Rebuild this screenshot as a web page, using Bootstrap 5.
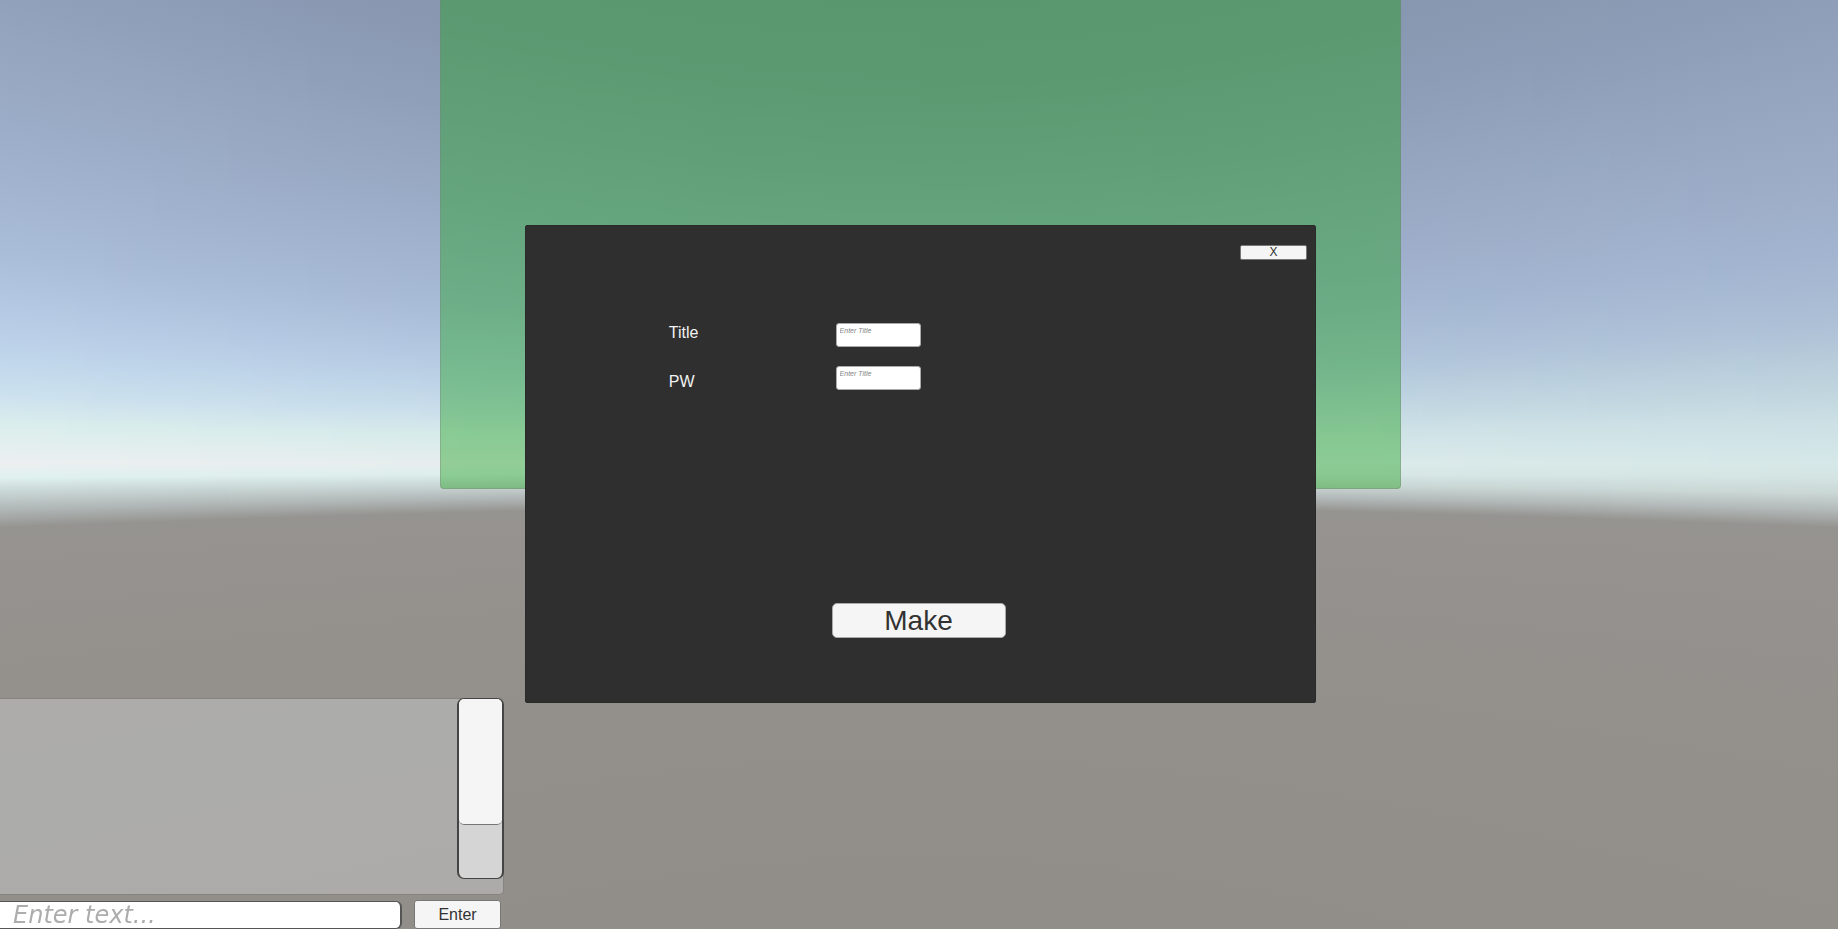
<!DOCTYPE html>
<html lang="en">
<head>
<meta charset="utf-8">
<meta name="viewport" content="width=device-width, initial-scale=1">
<title>Make room</title>
<link href="https://cdn.jsdelivr.net/npm/bootstrap@5.3.0/dist/css/bootstrap.min.css" rel="stylesheet">
<style>
  body { font-family: "Liberation Sans", Arial, sans-serif; background: #928e89; color: #323232; }
  .scene { display: grid; min-height: 100vh; grid-template-columns: 440fr 85fr 791fr 85fr 437fr; grid-template-rows: 225fr 264fr 214fr 226fr; }
  .sky { grid-area: 1 / 1 / -1 / -1; min-width: 0; min-height: 0; height: 100vh; }
  .board { grid-area: 1 / 2 / 3 / 5; background: rgba(26,158,24,.41); border: 1px solid rgba(120,125,125,.35); border-top: 0; border-radius: 0 0 4px 4px; }
  .room-dialog { grid-area: 2 / 3 / 4 / 4; background: #2f2f2f; border: 1px solid #292b2a; border-radius: 2px; padding: 19px 8px 64px; }
  .ui-btn { background: #f5f5f5; color: #323232; border: 1px solid #777; padding: 0; display: flex; align-items: center; justify-content: center; }
  .ui-btn:hover { background: #fff; }
  .close-btn { width: 67px; height: 15px; font-size: 12px; line-height: 13px; border-radius: 2px; }
  .make-btn { width: 174px; height: 35px; font-size: 28px; line-height: 32px; border-radius: 5px; margin-right: 4px; border-color: #aaa; }
  .fields { display: grid; grid-template-columns: 135fr 167fr 472fr; margin-top: 63px; }
  .names { grid-column: 2; color: #f2f2f2; font-size: 16px; line-height: 20px; gap: 29px; }
  .inputs { gap: 19px; }
  .room-input { width: 85px; height: 24px; padding: 2px 3px 12px; font-size: 7px; line-height: 8px; border: 1px solid #aaa; border-radius: 3px; background: #fff; }
  .room-input::placeholder { color: #858585; font-style: italic; opacity: 1; }
  .chat { grid-area: 3 / 1 / -1 / 3; width: 504px; z-index: 1; }
  .chat-log { height: 197px; background: rgba(221,226,228,.35); border: 1px solid #858481; border-left: 0; border-radius: 0 5px 5px 0; }
  .track { width: 47px; height: 181px; margin: -1px -1px 0 0; background: #d5d5d5; border: 2px solid #444; border-width: 1px 2px; border-radius: 7px; }
  .handle { height: 126px; background: #f5f5f5; border-bottom: 1px solid #777; border-radius: 5px; }
  .chat-row { height: 29px; gap: 12px; margin-top: 5px; }
  .chat-input { width: 402px; height: 28px; margin-top: 1px; padding: 0 13px; border: 1px solid #555; border-width: 1px 2px 1px 0; border-radius: 0 6px 6px 0; background: #fff; font-family: "DejaVu Sans", sans-serif; font-size: 24px; line-height: 24px; }
  .chat-input::placeholder { color: #adadad; font-style: italic; opacity: 1; }
  .send-btn { width: 87px; height: 29px; font-size: 16px; line-height: 24px; border-radius: 3px; }
</style>
</head>
<body>
<main class="scene">
  <canvas class="sky w-100" id="sky" aria-hidden="true"></canvas>
  <div class="board"></div>

  <form class="room-dialog d-flex flex-column" onsubmit="return false">
    <button type="button" class="ui-btn close-btn align-self-end">X</button>
    <div class="fields">
      <div class="names d-flex flex-column">
        <label for="roomTitle">Title</label>
        <label for="roomPw">PW</label>
      </div>
      <div class="inputs d-flex flex-column">
        <input class="room-input" id="roomTitle" type="text" placeholder="Enter Title">
        <input class="room-input" id="roomPw" type="text" placeholder="Enter Title">
      </div>
    </div>
    <button type="submit" class="ui-btn make-btn mt-auto align-self-center">Make</button>
  </form>

  <section class="chat align-self-end">
    <div class="chat-log d-flex justify-content-end">
      <div class="track"><div class="handle"></div></div>
    </div>
    <form class="chat-row d-flex" onsubmit="return false">
      <input class="chat-input" type="text" placeholder="Enter text..." aria-label="Chat message">
      <button type="submit" class="ui-btn send-btn">Enter</button>
    </form>
  </section>
</main>
<script src="https://cdn.jsdelivr.net/npm/bootstrap@5.3.0/dist/js/bootstrap.bundle.min.js"></script>
<script>
  // Sky colours by elevation: [offset from the horizon, sunny side, far side]
  const stops = [
    [-704, [133,148,172], [133,148,172]],
    [-579, [137,151,177], [136,152,176]],
    [-464, [146,161,187], [142,157,184]],
    [-356, [154,171,198], [151,167,193]],
    [-284, [161,179,207], [157,173,200]],
    [-213, [169,188,216], [162,180,207]],
    [-142, [184,204,230], [173,192,214]],
    [-106, [192,214,235], [183,203,218]],
    [-67,  [205,226,238], [195,215,224]],
    [-40,  [218,238,237], [204,224,229]],
    [-1,   [236,239,240], [214,232,232]],
    [13,   [223,241,240], [211,228,226]],
    [29,   [198,211,210], [202,215,213]],
    [45,   [176,183,182], [180,187,186]],
    [63,   [149,148,145], [149,148,145]],
    [96,   [150,146,143], [150,146,143]],
    [320,  [147,143,138], [147,143,139]],
    [720,  [145,141,136], [145,141,136]]
  ];
  const first = stops[0][0], last = stops[stops.length - 1][0];
  const canvas = document.getElementById('sky');
  function paint() {
    const w = canvas.width = canvas.clientWidth;
    const h = canvas.height = canvas.clientHeight;
    const g = canvas.getContext('2d');
    const horizon = h * 0.5, focal = h * 0.866;
    for (let x = 0; x < w; x += 2) {
      const k = Math.hypot(focal, x - w / 2) / 1221;
      const mix = x / w;
      const fill = g.createLinearGradient(0, horizon + first * k, 0, horizon + last * k);
      for (const [u, a, b] of stops) {
        const c = a.map((v, i) => Math.round(v + (b[i] - v) * mix));
        fill.addColorStop((u - first) / (last - first), `rgb(${c})`);
      }
      g.fillStyle = fill;
      g.fillRect(x, 0, 2, h);
    }
  }
  paint();
  addEventListener('resize', paint);
</script>
</body>
</html>
